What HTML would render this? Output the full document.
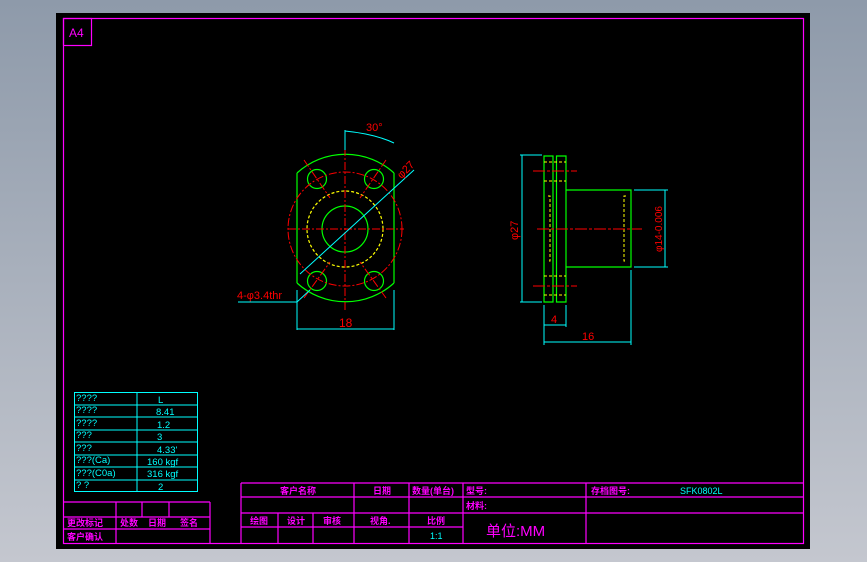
<!DOCTYPE html>
<html><head><meta charset="utf-8"><style>
html,body{margin:0;padding:0;width:867px;height:562px;overflow:hidden;background:linear-gradient(#8e9aaa,#c4c7cf);}
svg{position:absolute;left:0;top:0}
text{font-family:"Liberation Sans","Noto Sans CJK SC",sans-serif;}
</style></head><body>
<svg width="867" height="562" viewBox="0 0 867 562">
<rect x="56" y="13" width="754" height="536" fill="#000"/>
<g stroke="#ff00ff" stroke-width="1.2" fill="none">
<rect x="63.5" y="18.5" width="740" height="525"/>
<rect x="63.5" y="18.5" width="28" height="27"/>
<!-- left title -->
<path d="M63 502H210M63 517H210M63 529H210M116 502V543M142 502V517M169 502V517M210 502V543M116 529V543"/>
<!-- right title -->
<path d="M241 483H803M241 497H803M241 513H803M241 527H463M241 483V543M278 513V543M313 513V543M354 483V543M409 483V543M463 483V543M586 483V543"/>
</g>
<text x="69" y="37" fill="#ff00ff" font-size="12">A4</text>
<g fill="#ff00ff" font-size="9" font-weight="bold">
<text x="67" y="526">更改标记</text><text x="120" y="526">处数</text><text x="148" y="526">日期</text><text x="180" y="526">签名</text>
<text x="67" y="540">客户确认</text>
<text x="280" y="494">客户名称</text><text x="373" y="494">日期</text><text x="412" y="494">数量(单台)</text><text x="466" y="494">型号:</text><text x="591" y="494">存档图号:</text>
<text x="466" y="509">材料:</text>
<text x="250" y="524">绘图</text><text x="287" y="524">设计</text><text x="323" y="524">审核</text><text x="370" y="524">视角.</text><text x="427" y="524">比例</text>
<text x="486" y="536" font-size="15" font-weight="normal">单位:MM</text>
</g>
<g fill="#00ffff" font-size="9">
<text x="680" y="494">SFK0802L</text>
<text x="430" y="539">1:1</text>
</g>
<!-- cyan table -->
<g stroke="#00ffff" stroke-width="1" fill="none">
<rect x="74.5" y="392.5" width="123" height="99"/>
<path d="M137 392V492M74 405H198M74 417H198M74 430H198M74 442H198M74 455H198M74 467H198M74 480H198"/>
</g>
<g fill="#00ffff" font-size="9.5">
<text x="76" y="401">????</text><text x="158" y="403">L</text>
<text x="76" y="413">????</text><text x="156" y="415">8.41</text>
<text x="76" y="426">????</text><text x="157" y="428">1.2</text>
<text x="76" y="438">???</text><text x="157" y="440">3</text>
<text x="76" y="451">???</text><text x="157" y="453">4.33'</text>
<text x="76" y="463">???(Ca)</text><text x="147" y="465">160 kgf</text>
<text x="76" y="476">???(C0a)</text><text x="147" y="477">316 kgf</text>
<text x="76" y="488">?  ?</text><text x="158" y="490">2</text>
</g>
<!-- front view -->
<g fill="none" stroke-width="1.2">
<path stroke="#00ff00" d="M297 173V283M394 173V283M297 173A72 72 0 0 1 394 173M297 283A72 72 0 0 0 394 283"/>
<circle cx="345" cy="229" r="23" stroke="#00ff00"/>
<circle cx="317" cy="179" r="9.5" stroke="#00ff00"/>
<circle cx="374" cy="179" r="9.5" stroke="#00ff00"/>
<circle cx="317" cy="281" r="9.5" stroke="#00ff00"/>
<circle cx="374" cy="281" r="9.5" stroke="#00ff00"/>
<circle cx="345" cy="229" r="38" stroke="#ffff00" stroke-dasharray="3 2"/>
<g stroke="#ff0000" stroke-width="1" stroke-dasharray="8 2 2 2">
<circle cx="345" cy="229" r="57"/>
<path d="M345 148V310M288 229H404M304 160L330 198M386 160L360 198M304 298L330 262M386 298L360 262"/>
</g>
<g stroke="#00ffff" stroke-width="1">
<path d="M345 130V150M345 131Q375 134 394 143M300 274L414 170M297 290V330M394 290V330M297 329H394M238 302H297L310 290"/>
</g>
</g>
<g fill="#ff0000" font-size="11">
<text x="366" y="131">30°</text>
<text x="396" y="178" transform="rotate(-45 400 172)">φ27</text>
<text x="237" y="299">4-φ3.4thr</text>
<text x="339" y="327" font-size="12">18</text>
</g>
<!-- side view -->
<g fill="none" stroke-width="1.2">
<path stroke="#00ff00" d="M544 156H553V302H544ZM556.5 156H566V302H556.5ZM566 190H631V267H566"/>
<g stroke="#ffff00" stroke-dasharray="3 2" stroke-width="1">
<path d="M544 162H566M544 181H566M544 276H566M544 295H566M548 196H550V261H548M626 196H624V261H626"/>
</g>
<g stroke="#ff0000" stroke-width="1" stroke-dasharray="12 2 3 2"><path d="M533 171H577M533 286H577M537 229H642"/></g>
<g stroke="#00ffff" stroke-width="1">
<path d="M520 155H542M522 155V302M520 302H542M634 190H668M634 267H668M665 190V267M544 305V345M566 305V327M631 270V345M544 325H566M544 342H631"/>
</g>
</g>
<g fill="#ff0000" font-size="11">
<text transform="translate(518 240) rotate(-90)">φ27</text>
<text transform="translate(662 252) rotate(-90)" font-size="10">φ14-0.006</text>
<text x="551" y="323">4</text>
<text x="582" y="340">16</text>
</g>
</svg>
</body></html>
